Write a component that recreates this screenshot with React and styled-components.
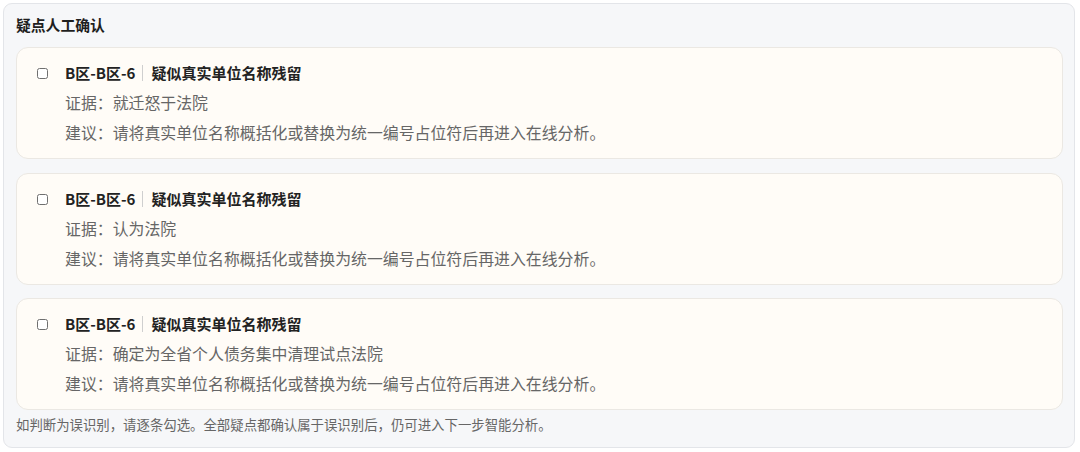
import React from "react";
import styled, { createGlobalStyle } from "styled-components";

const Global = createGlobalStyle`
  html, body { margin: 0; padding: 0; background: #ffffff; }
  body { font-family: "Noto Sans CJK SC", "Noto Sans", sans-serif; }
`;

const Page = styled.div`
  padding: 3px 5px 3px 3px;
`;

const Panel = styled.section`
  background: #f6f7f9;
  border: 1px solid #e3e5e9;
  border-radius: 9px;
  padding: 10px 11px 13px 12px;
  display: flex;
  flex-direction: column;
`;

const PanelTitle = styled.h3`
  margin: 0 0 11px;
  font-size: 14.8px;
  line-height: 22px;
  font-weight: 700;
  color: #1f1f1f;
`;

const List = styled.div`
  display: flex;
  flex-direction: column;
  gap: 13.5px;
`;

const Card = styled.label`
  display: grid;
  grid-template-columns: 11px 1fr;
  column-gap: 17px;
  padding: 10px 20px 10px 20px;
  background: #fffcf7;
  border: 1px solid #ebe8e3;
  border-radius: 12px;
`;

const Check = styled.input.attrs({ type: "checkbox" })`
  appearance: none;
  margin: 10px 0 0;
  width: 11px;
  height: 11px;
  box-sizing: border-box;
  border: 1px solid #6f6f6f;
  border-radius: 2.5px;
  background: #fff;
  cursor: pointer;
`;

const Body = styled.div`
  display: flex;
  flex-direction: column;
`;

const Title = styled.div`
  display: flex;
  align-items: center;
  font-size: 15px;
  line-height: 30px;
  font-weight: 700;
  color: #222;
`;

const Sep = styled.span`
  display: inline-block;
  width: 1px;
  height: 16px;
  background: #cfcfcf;
  margin: 0 8px 0 7px;
`;

const Line = styled.div`
  font-size: 15.9px;
  line-height: 30px;
  color: #666;
`;

const Footer = styled.p`
  margin: 4px 0 0;
  font-size: 13.4px;
  line-height: 20px;
  color: #666;
`;

const items = [
  { code: "B区-B区-6", kind: "疑似真实单位名称残留", evidence: "就迁怒于法院" },
  { code: "B区-B区-6", kind: "疑似真实单位名称残留", evidence: "认为法院" },
  { code: "B区-B区-6", kind: "疑似真实单位名称残留", evidence: "确定为全省个人债务集中清理试点法院" },
];

export default function App() {
  return (
    <Page>
      <Global />
      <Panel>
        <PanelTitle>疑点人工确认</PanelTitle>
        <List>
          {items.map((it, i) => (
            <Card key={i}>
              <Check />
              <Body>
                <Title>
                  {it.code}
                  <Sep />
                  {it.kind}
                </Title>
                <Line>证据：{it.evidence}</Line>
                <Line>建议：请将真实单位名称概括化或替换为统一编号占位符后再进入在线分析。</Line>
              </Body>
            </Card>
          ))}
        </List>
        <Footer>如判断为误识别，请逐条勾选。全部疑点都确认属于误识别后，仍可进入下一步智能分析。</Footer>
      </Panel>
    </Page>
  );
}
